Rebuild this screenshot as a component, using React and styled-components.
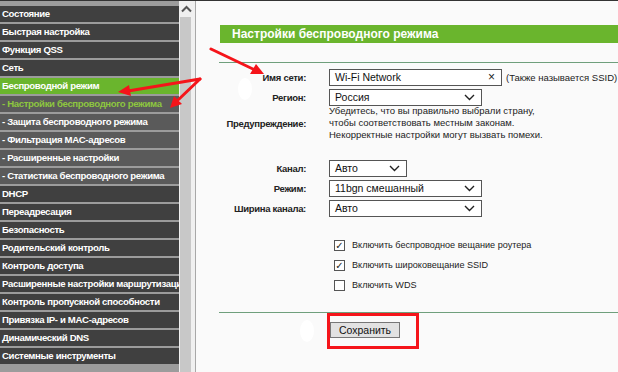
import styled, { createGlobalStyle } from 'styled-components';

const GlobalStyle = createGlobalStyle`
    html, body {
        margin: 0;
        padding: 0;
        background: #fafafa;
        font-family: "Liberation Sans", Arial, sans-serif;
    }
    #root {
        width: 618px;
        height: 372px;
        overflow: hidden;
    }
`;

const menu = [
    { label: 'Состояние' },
    { label: 'Быстрая настройка' },
    { label: 'Функция QSS' },
    { label: 'Сеть' },
    { label: 'Беспроводной режим', active: true },
    { label: '- Настройки беспроводного режима', sub: true, active: true },
    { label: '- Защита беспроводного режима', sub: true },
    { label: '- Фильтрация MAC-адресов', sub: true },
    { label: '- Расширенные настройки', sub: true },
    { label: '- Статистика беспроводного режима', sub: true },
    { label: 'DHCP' },
    { label: 'Переадресация' },
    { label: 'Безопасность' },
    { label: 'Родительский контроль' },
    { label: 'Контроль доступа' },
    { label: 'Расширенные настройки маршрутизации' },
    { label: 'Контроль пропускной способности' },
    { label: 'Привязка IP- и MAC-адресов' },
    { label: 'Динамический DNS' },
    { label: 'Системные инструменты' },
];

const Chevron = () => (
    <svg width="11" height="7" viewBox="0 0 11 7">
        <path d="M1 1 L5.5 5.5 L10 1" fill="none" stroke="#222" strokeWidth="1.4" />
    </svg>
);

const App = () => {
    return (
        <>
            <GlobalStyle />
            <Page>
                <Sidebar>
                    {menu.map((m) => (
                        <MenuItem key={m.label} $sub={m.sub} $active={m.active}>
                            {m.label}
                        </MenuItem>
                    ))}
                </Sidebar>
                <Scroll>
                    <ScrollArrow>
                        <svg width="11" height="8" viewBox="0 0 11 8">
                            <path d="M1 6.5 L5.5 2 L10 6.5" fill="none" stroke="#555" strokeWidth="2" />
                        </svg>
                    </ScrollArrow>
                    <Track />
                </Scroll>
                <Main>
                    <Header>Настройки беспроводного режима</Header>
                    <Rule />
                    <Form>
                        <Row>
                            <Label>Имя сети:</Label>
                            <Input $w={173}>
                                Wi-Fi Network
                                <Clear>×</Clear>
                            </Input>
                            <Hint>(Также называется SSID)</Hint>
                        </Row>
                        <Row>
                            <Label>Регион:</Label>
                            <Select $w={153}>
                                Россия
                                <Chevron />
                            </Select>
                        </Row>
                        <WarnRow>
                            <Label>Предупреждение:</Label>
                            <Warn>
                                Убедитесь, что вы правильно выбрали страну,<br />
                                чтобы соответствовать местным законам.<br />
                                Некорректные настройки могут вызвать помехи.
                            </Warn>
                        </WarnRow>
                        <Group>
                            <Row>
                                <Label>Канал:</Label>
                                <Select $w={78}>
                                    Авто
                                    <Chevron />
                                </Select>
                            </Row>
                            <Row>
                                <Label>Режим:</Label>
                                <Select $w={153}>
                                    11bgn смешанный
                                    <Chevron />
                                </Select>
                            </Row>
                            <Row>
                                <Label>Ширина канала:</Label>
                                <Select $w={153}>
                                    Авто
                                    <Chevron />
                                </Select>
                            </Row>
                        </Group>
                        <Checks>
                            <Check>
                                <Box $on>✓</Box>Включить беспроводное вещание роутера
                            </Check>
                            <Check>
                                <Box $on>✓</Box>Включить широковещание SSID
                            </Check>
                            <Check>
                                <Box />Включить WDS
                            </Check>
                        </Checks>
                    </Form>
                    <Rule $bottom />
                    <Actions>
                        <Button>Сохранить</Button>
                    </Actions>
                </Main>
                <Overlay width="618" height="372" viewBox="0 0 618 372">
                    <ellipse cx="245" cy="89" rx="7" ry="11" fill="#fff" />
                    <ellipse cx="307" cy="331" rx="7" ry="11" fill="#fff" />
                    <g stroke="#f5141a" strokeWidth="3" strokeLinecap="round" fill="none">
                        <line x1="211" y1="49" x2="255" y2="70" />
                        <line x1="200" y1="79" x2="128" y2="91" />
                        <line x1="200" y1="79" x2="177" y2="101" />
                    </g>
                    <g fill="#f5141a">
                        <polygon points="264,74 250,74 256,64" />
                        <polygon points="118,92 129,85 131,96" />
                        <polygon points="170,108 174,96 182,104" />
                    </g>
                    <rect x="328.5" y="314.5" width="89" height="33" fill="none" stroke="#f5141a" strokeWidth="3" />
                </Overlay>
            </Page>
        </>
    );
};

const Page = styled.div`
    position: relative;
    display: flex;
    width: 618px;
    height: 372px;
    border-top: 1px solid #333;
    box-sizing: border-box;
    background: #fafafa;
`;

const Sidebar = styled.div`
    width: 179px;
    flex-shrink: 0;
    background: #9c9c9c;
    padding-top: 5px;
    display: flex;
    flex-direction: column;
    gap: 2px;
    overflow: hidden;
`;

const MenuItem = styled.div`
    height: 16px;
    line-height: 16px;
    padding-left: 2px;
    font-size: 9.6px;
    letter-spacing: -0.35px;
    font-weight: bold;
    white-space: nowrap;
    overflow: hidden;
    color: ${(p) => (p.$sub && p.$active ? '#8dc63f' : '#fff')};
    background: ${(p) =>
        p.$active && !p.$sub ? '#6ab52d' : p.$sub ? '#5a5a5a' : '#404040'};
`;

const Scroll = styled.div`
    width: 16px;
    flex-shrink: 0;
    background: #f0f0f0;
    border-right: 1px solid #a8a8a8;
    display: flex;
    flex-direction: column;
    align-items: flex-start;
`;

const ScrollArrow = styled.div`
    height: 16px;
    width: 12px;
    display: flex;
    align-items: center;
    justify-content: center;
    margin-left: 1px;
`;

const Track = styled.div`
    flex: 1;
    width: 11px;
    margin-left: 1px;
    background: #c8c8c8;
`;

const Main = styled.div`
    flex: 1;
    padding-top: 24px;
    display: flex;
    flex-direction: column;
`;

const Header = styled.div`
    margin-left: 24px;
    height: 18px;
    line-height: 18px;
    background: #6ab52d;
    color: #fff;
    font-size: 12px;
    font-weight: bold;
    padding-left: 12px;
`;

const Rule = styled.div`
    margin-left: 23px;
    height: 1px;
    background: #6f9f7c;
    margin-top: ${(p) => (p.$bottom ? '17px' : '19px')};
`;

const Form = styled.div`
    padding-top: 4px;
    display: flex;
    flex-direction: column;
`;

const Row = styled.div`
    display: flex;
    align-items: center;
    height: 20px;
`;

const Label = styled.div`
    width: 110px;
    text-align: right;
    font-size: 9.5px;
    letter-spacing: -0.3px;
    font-weight: bold;
    color: #222;
    margin-right: 23px;
    white-space: nowrap;
`;

const field = `
    height: 17px;
    box-sizing: border-box;
    border: 1px solid #555;
    background: #fff;
    font-size: 10.5px;
    color: #111;
    padding: 0 6px 0 5px;
    display: flex;
    align-items: center;
    justify-content: space-between;
    white-space: nowrap;
`;

const Input = styled.div`
    ${field}
    width: ${(p) => p.$w}px;
`;

const Select = styled.div`
    ${field}
    width: ${(p) => p.$w}px;
`;

const Clear = styled.span`
    font-size: 12px;
    color: #222;
`;

const Hint = styled.span`
    margin-left: 4px;
    font-size: 9.5px;
    color: #222;
    white-space: nowrap;
`;

const WarnRow = styled.div`
    display: flex;
    align-items: center;
    margin-top: -2px;
`;

const Warn = styled.div`
    font-size: 9.5px;
    line-height: 12px;
    color: #222;
`;

const Group = styled.div`
    margin-top: 17px;
`;

const Checks = styled.div`
    margin-top: 17px;
    padding-left: 138px;
`;

const Check = styled.div`
    display: flex;
    align-items: center;
    height: 20px;
    font-size: 9.1px;
    color: #222;
`;

const Box = styled.span`
    width: 11px;
    height: 11px;
    box-sizing: border-box;
    border: 1px solid #555;
    background: #fff;
    margin-right: 7px;
    font-size: 10px;
    line-height: 10px;
    text-align: center;
    color: #222;
    font-family: "DejaVu Sans", sans-serif;
`;

const Actions = styled.div`
    padding: 7px 0 0 134px;
`;

const Button = styled.button`
    width: 70px;
    height: 16px;
    padding: 0;
    font-family: "Liberation Sans", Arial, sans-serif;
    font-size: 10.5px;
    color: #111;
    background: #e2e2e2;
    border: 1px solid #777;
`;

const Overlay = styled.svg`
    position: absolute;
    left: 0;
    top: -1px;
    pointer-events: none;
`;

export default App;
